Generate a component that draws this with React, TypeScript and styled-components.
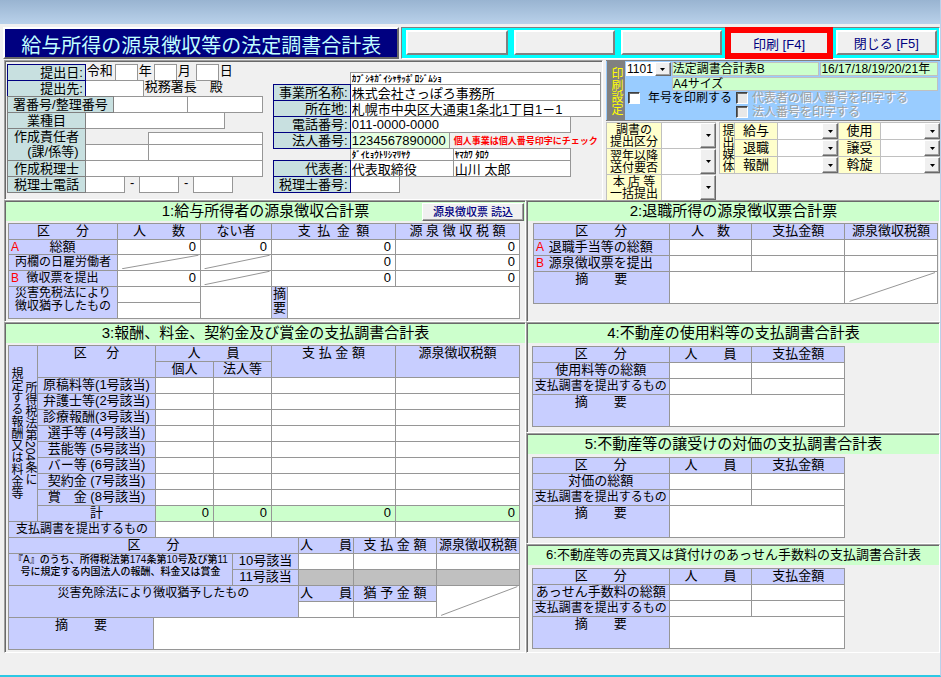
import React from 'react';
import styled, { createGlobalStyle, css } from 'styled-components';

const line = '#969696';
const lilac = '#c8ceff';
const mint = '#ccffcc';
const face = '#f0f0f0';
const navy = '#000080';

const fr = (cols: number[]) => cols.map((c) => `minmax(0, ${c}fr)`).join(' ');

const GlobalStyle = createGlobalStyle`
  *, *::before, *::after { box-sizing: border-box; }
  body { margin: 0; background: ${face}; }
  body, input, select, button {
    font-family: "Liberation Sans", "Noto Sans CJK JP", sans-serif;
    font-size: 13px;
    color: #000;
  }
`;

const Page = styled.div`
  min-height: 100vh;
  display: flex;
  flex-direction: column;
  background: ${face};
  border-right: 1px solid #b9d1ea;
  border-bottom: 2px solid #2cc8e4;
  white-space: nowrap;
  line-height: 14px;
`;

const Caption = styled.div`
  height: 24px;
  background: linear-gradient(#99b4d1, #b9d1ea);
`;

const TopRow = styled.header`
  display: grid;
  grid-template-columns: ${fr([396, 538])};
  gap: 2px;
  padding: 3px 0 1px 3px;
`;

const Title = styled.h1`
  margin: 0;
  height: 32px;
  padding-top: 3px;
  border: 2px solid;
  border-color: #fff #696969 #696969 #fff;
  background: ${navy};
  color: #c0ffff;
  font-size: 20px;
  font-weight: 400;
  line-height: 28px;
  text-align: center;
`;

const Toolbar = styled.nav`
  height: 32px;
  display: grid;
  grid-template-columns: repeat(5, minmax(0, 1fr));
  gap: 6px;
  padding: 2px 2px 3px 4px;
  background: #0ff;
  border: 1px solid;
  border-color: #808080 #fff #fff #808080;
`;

const ToolButton = styled.button<{ $hot?: boolean }>`
  min-width: 0;
  padding: 0;
  background: ${face};
  color: ${navy};
  border: 2px solid;
  border-color: #fff #808080 #808080 #fff;
  ${(p) => p.$hot && css`
    margin: -3px -3px -4px;
    border: 6px solid #f00;
  `}
`;

const Upper = styled.div`
  display: grid;
  grid-template-columns: ${fr([599, 334])};
  gap: 3px;
  margin-left: 4px;
  height: 140px;
`;

const Panel = styled.section<{ $bottom?: number }>`
  border: 1px solid;
  border-color: #a0a0a0 #fff #fff #a0a0a0;
  box-shadow: inset 1px 1px 0 #696969;
  padding: 1px 0 ${(p) => p.$bottom ?? 0}px 1px;
  min-width: 0;
`;

const FormPanel = styled(Panel)`
  display: grid;
  grid-template-columns: ${fr([255, 328])};
  column-gap: 11px;
  padding: 3px 2px 0 2px;
  margin-bottom: 1px;
`;

const FormColumn = styled.div<{ $top?: number }>`
  padding-top: ${(p) => p.$top ?? 0}px;
`;

const Line = styled.div<{ $cols: number[]; $h?: number }>`
  display: grid;
  grid-template-columns: ${(p) => fr(p.$cols)};
  grid-template-rows: ${(p) => p.$h ?? 16}px;
`;

const Tag = styled.label<{ $navy?: boolean; $center?: boolean }>`
  position: relative;
  z-index: 1;
  display: flex;
  align-items: center;
  justify-content: ${(p) => (p.$center ? 'center' : 'flex-end')};
  padding: 0 2px;
  margin: 0 -1px -1px 0;
  border: 1px solid ${(p) => (p.$navy ? navy : '#808080')};
  background: #c8e0e0;
`;

const TallTag = styled(Tag)`
  flex-direction: column;
  justify-content: flex-start;
  height: 33px;
  line-height: 15px;
`;

const Box = styled.input<{ $small?: boolean; $green?: boolean }>`
  min-width: 0;
  width: calc(100% + 1px);
  height: calc(100% + 1px);
  border: 1px solid ${line};
  border-radius: 0;
  padding: 0 1px;
  background: ${(p) => (p.$green ? '#e4ffe0' : '#fff')};
  ${(p) => p.$small && css`font-size: 9px; font-weight: 700;`}
`;

const Word = styled.span<{ $center?: boolean }>`
  padding-left: 2px;
  text-align: ${(p) => (p.$center ? 'center' : 'left')};
`;

const Note = styled.span`
  padding-left: 5px;
  color: #f00;
  font-size: 9px;
  font-weight: 700;
  line-height: 18px;
`;

const Settings = styled.div`
  display: flex;
  flex-direction: column;
  gap: 1px;
  min-width: 0;
`;

const PrintPanel = styled.section`
  display: grid;
  grid-template-columns: 18px minmax(0, 1fr);
  height: 61px;
  padding-left: 1px;
  border-top: 1px solid #808080;
  background: #99ccff;
  border-bottom: 1px solid #808080;
  font-size: 12px;
`;

const PrintTitle = styled.h2`
  margin: 0;
  font-size: 12px;
  font-weight: 400;
  line-height: 18px;
  writing-mode: vertical-rl;
  text-align: center;
  background: #808080;
  color: #ff0;
`;

const PrintLine = styled.div<{ $cols: number[] }>`
  display: grid;
  grid-template-columns: ${(p) => fr(p.$cols)};
  grid-template-rows: 14px;
  margin: 1px 2px 0 1px;
  column-gap: 1px;
`;

const Readout = styled.output<{ $start?: number }>`
  grid-column-start: ${(p) => p.$start ?? 'auto'};
  background: ${mint};
  border: 1px solid #c0c0c0;
  line-height: 12px;
`;

const Checks = styled.div`
  display: grid;
  grid-template-columns: ${fr([108, 204])};
  padding-left: 3px;
`;

const Check = styled.label<{ $off?: boolean; $col: number }>`
  grid-column: ${(p) => p.$col};
  display: flex;
  align-items: center;
  gap: ${(p) => (p.$off ? 4 : 8)}px;
  height: 14px;
  ${(p) => p.$off && css`color: #a0a0a0; text-shadow: 1px 1px 0 #fff;`}
`;

const Tick = styled.input`
  appearance: none;
  flex: none;
  width: 12px;
  height: 12px;
  margin: 0;
  background: #fff;
  border: 1px solid;
  border-color: #404040 #fff #fff #404040;
  box-shadow: inset 1px 1px 0 #696969;
  &:disabled { background: #e8e8e8; }
  &:checked { background: #000; }
`;

const Choices = styled.section`
  display: grid;
  grid-template-columns: ${fr([110, 221])};
  column-gap: 3px;
  align-items: start;
`;

const ChoiceGrid = styled.div<{ $cols: number[]; $row: number }>`
  display: grid;
  grid-template-columns: ${(p) => fr(p.$cols)};
  grid-auto-rows: ${(p) => p.$row}px;
  gap: 1px;
  padding: 1px 0 1px 1px;
  background: #c0c0c0;
`;

const ChoiceLabel = styled.label<{ $wide?: boolean }>`
  display: flex;
  align-items: center;
  justify-content: center;
  text-align: center;
  line-height: 12px;
  font-size: ${(p) => (p.$wide ? 13 : 12)}px;
  background: #ffffcc;
`;

const MediaTitle = styled.h2`
  grid-row: span 3;
  margin: 0;
  font-size: 12px;
  font-weight: 400;
  line-height: 14px;
  writing-mode: vertical-rl;
  text-align: center;
  background: #ffffcc;
`;

const PickerFrame = styled.div`
  position: relative;
  display: flex;
  min-width: 0;
  background: #fff;
`;

const PickerSelect = styled.select`
  appearance: none;
  width: 100%;
  height: 100%;
  border: 0;
  border-radius: 0;
  padding: 0 16px 0 1px;
  background: #fff;
  font-size: 12px;
`;

const PickerArrow = styled.span`
  position: absolute;
  top: 0;
  right: 0;
  bottom: 0;
  width: 16px;
  display: grid;
  place-items: center;
  pointer-events: none;
  background: ${face};
  border: 1px solid;
  border-color: #fff #696969 #696969 #fff;
  box-shadow: inset -1px -1px 0 #a0a0a0;
`;

function Picker({ id, label, value }: { id?: string; label?: string; value?: string }) {
  return (
    <PickerFrame>
      <PickerSelect id={id} aria-label={label}>
        <option>{value ?? ''}</option>
      </PickerSelect>
      <PickerArrow>
        <svg width="5" height="3" viewBox="0 0 5 3"><path d="M0 0h5L2.5 3z" fill="#000" /></svg>
      </PickerArrow>
    </PickerFrame>
  );
}

const Lower = styled.main`
  display: grid;
  grid-template-columns: ${fr([522, 414])};
  margin-left: 4px;
`;

const Stack = styled.div`
  display: flex;
  flex-direction: column;
  min-width: 0;
`;

const Heading = styled.div`
  position: relative;
  height: 19px;
  background: ${mint};
`;

const HeadingText = styled.h2<{ $size?: number }>`
  margin: 0;
  font-size: ${(p) => p.$size ?? 15}px;
  font-weight: 400;
  line-height: 18px;
  text-align: center;
`;

const LoadButton = styled.button`
  position: absolute;
  top: 1px;
  right: 1px;
  width: 102px;
  height: 18px;
  padding: 0;
  font-size: 11px;
  font-weight: 500;
  line-height: 14px;
  color: ${navy};
  background: ${face};
  border: 1px solid;
  border-color: #fff #696969 #696969 #fff;
  box-shadow: inset -1px -1px 0 #a0a0a0;
`;

const TableArea = styled.div<{ $pad: string }>`
  padding: ${(p) => p.$pad};
`;

const Table = styled.table<{ $joined?: boolean }>`
  width: 100%;
  table-layout: fixed;
  border-collapse: collapse;
  margin-top: ${(p) => (p.$joined ? -1 : 0)}px;
`;

const Col = styled.col<{ $w: number }>`
  width: ${(p) => p.$w}%;
`;

const Row = styled.tr<{ $h?: number }>`
  height: ${(p) => p.$h ?? 16}px;
`;

const cell = css`
  padding: 0;
  border: 1px solid ${line};
  vertical-align: top;
  line-height: 14px;
`;

const Th = styled.th<{ $size?: number }>`
  ${cell}
  background: ${lilac};
  font-weight: 400;
  font-size: ${(p) => p.$size ?? 13}px;
  text-align: center;
`;

const LeadTh = styled(Th)`
  line-height: 13px;
`;

const ClauseTh = styled(Th)`
  font-size: 10px;
  font-weight: 500;
  line-height: 12px;
`;

const Td = styled.td<{ $tone?: string }>`
  ${cell}
  background: ${(p) => p.$tone ?? '#fff'};
`;

const CellInput = styled.input<{ $h: number }>`
  display: block;
  width: 100%;
  height: ${(p) => p.$h}px;
  border: 0;
  border-radius: 0;
  padding: 0 4px 1px;
  background: transparent;
  text-align: right;
`;

const Slash = styled.svg<{ $h: number }>`
  display: block;
  width: 100%;
  height: ${(p) => p.$h}px;
`;

const Marked = styled.div`
  display: grid;
  grid-template-columns: 10px minmax(0, 1fr);
  padding: 0 12px 0 1px;
`;

const Mark = styled.span`
  color: #f00;
  font-size: 12px;
`;

const Vertical = styled.div`
  writing-mode: vertical-rl;
  width: 28px;
  height: 174px;
  line-height: 14px;
  font-size: 12px;
  text-align: center;
`;

function Cols({ widths }: { widths: number[] }) {
  const total = widths.reduce((a, b) => a + b, 0);
  return <colgroup>{widths.map((w, i) => <Col key={i} $w={(w / total) * 100} />)}</colgroup>;
}

type EntryProps = { name: string; value?: string; tone?: string; h?: number; span?: number; rows?: number };

function Entry({ name, value, tone, h = 14, span, rows }: EntryProps) {
  return (
    <Td $tone={tone} colSpan={span} rowSpan={rows}>
      <CellInput $h={h} aria-label={name} defaultValue={value} />
    </Td>
  );
}

function SlashCell({ h = 14, rows }: { h?: number; rows?: number }) {
  return (
    <Td rowSpan={rows}>
      <Slash $h={h} viewBox="0 0 100 100" preserveAspectRatio="none" aria-hidden="true">
        <line x1="5" y1="98" x2="98" y2="2" stroke={line} vectorEffect="non-scaling-stroke" />
      </Slash>
    </Td>
  );
}

function SalarySection() {
  return (
    <Panel $bottom={2}>
      <Heading>
        <HeadingText>1:給与所得者の源泉徴収合計票</HeadingText>
        <LoadButton type="button">源泉徴収票 読込</LoadButton>
      </Heading>
      <TableArea $pad="2px 5px 0 2px">
        <Table>
          <Cols widths={[109, 83, 71, 16, 108, 124]} />
          <tbody>
            <Row>
              <Th>区　　分</Th>
              <Th>人　　数</Th>
              <Th>ない者</Th>
              <Th colSpan={2}>支&ensp;払&ensp;金&ensp;額</Th>
              <Th>源 泉 徴 収 税 額</Th>
            </Row>
            <Row $h={15}>
              <Th><Marked><Mark>A</Mark>総額</Marked></Th>
              <Entry name="総額 人数" value="0" />
              <Entry name="総額 ない者" value="0" />
              <Entry name="総額 支払金額" value="0" span={2} />
              <Entry name="総額 源泉徴収税額" value="0" />
            </Row>
            <Row>
              <Th $size={12}>丙欄の日雇労働者</Th>
              <SlashCell />
              <SlashCell />
              <Entry name="丙欄 支払金額" value="0" span={2} />
              <Entry name="丙欄 源泉徴収税額" value="0" />
            </Row>
            <Row>
              <Th $size={12}><Marked><Mark>B</Mark>徴収票を提出</Marked></Th>
              <Entry name="提出 人数" value="0" />
              <SlashCell />
              <Entry name="提出 支払金額" value="0" span={2} />
              <Entry name="提出 源泉徴収税額" value="0" />
            </Row>
            <Row>
              <LeadTh $size={12} rowSpan={2}>災害免税法により<br />徴収猶予したもの</LeadTh>
              <Entry name="猶予 人数" />
              <Entry name="猶予 ない者" rows={2} h={30} />
              <Th rowSpan={2}>摘<br />要</Th>
              <Entry name="摘要" span={2} rows={2} h={30} />
            </Row>
            <Row>
              <Entry name="猶予 金額" />
            </Row>
          </tbody>
        </Table>
      </TableArea>
    </Panel>
  );
}

function RetirementSection() {
  return (
    <Panel>
      <Heading><HeadingText>2:退職所得の源泉徴収票合計票</HeadingText></Heading>
      <TableArea $pad="2px 1px 0 5px">
        <Table>
          <Cols widths={[136, 83, 93, 93]} />
          <tbody>
            <Row>
              <Th>区　　分</Th>
              <Th>人　数</Th>
              <Th>支払金額</Th>
              <Th>源泉徴収税額</Th>
            </Row>
            {[['A', '退職手当等の総額'], ['B', '源泉徴収票を提出']].map(([m, t]) => (
              <Row key={m}>
                <Th><Marked><Mark>{m}</Mark>{t}</Marked></Th>
                <Entry name={`${t} 人数`} />
                <Entry name={`${t} 支払金額`} />
                <Entry name={`${t} 源泉徴収税額`} />
              </Row>
            ))}
            <Row $h={32}>
              <Th>摘　　要</Th>
              <Entry name="退職 摘要" span={2} h={30} />
              <SlashCell h={30} />
            </Row>
          </tbody>
        </Table>
      </TableArea>
    </Panel>
  );
}

const feeRows = [
  '原稿料等(1号該当)', '弁護士等(2号該当)', '診療報酬(3号該当)', '選手等 (4号該当)',
  '芸能等 (5号該当)', 'バー等 (6号該当)', '契約金 (7号該当)', '賞　金 (8号該当)',
];
const feeCols = ['個人', '法人等', '支払金額', '源泉徴収税額'];

function FeeSection() {
  return (
    <Panel $bottom={2}>
      <Heading><HeadingText>3:報酬、料金、契約金及び賞金の支払調書合計表</HeadingText></Heading>
      <TableArea $pad="2px 5px 0 2px">
        <Table>
          <Cols widths={[29, 118, 58, 58, 124, 124]} />
          <tbody>
            <Row>
              <Th rowSpan={11}><Vertical>所得税法第204条に<br />規定する報酬又は料金等</Vertical></Th>
              <Th rowSpan={2}>区　&ensp;分</Th>
              <Th colSpan={2}>人　　員</Th>
              <Th rowSpan={2}>支 払 金 額</Th>
              <Th rowSpan={2}>源泉徴収税額</Th>
            </Row>
            <Row>
              <Th>個人</Th>
              <Th>法人等</Th>
            </Row>
            {feeRows.map((r) => (
              <Row key={r}>
                <Th>{r}</Th>
                {feeCols.map((c) => <Entry key={c} name={`${r} ${c}`} />)}
              </Row>
            ))}
            <Row>
              <Th>計</Th>
              {feeCols.map((c) => <Entry key={c} name={`計 ${c}`} value="0" tone={mint} />)}
            </Row>
            <Row>
              <Th $size={12} colSpan={2}>支払調書を提出するもの</Th>
              {feeCols.map((c) => <Entry key={c} name={`提出 ${c}`} />)}
            </Row>
          </tbody>
        </Table>
        <Table $joined>
          <Cols widths={[145, 79, 66, 55, 83, 83]} />
          <tbody>
            <Row>
              <Th colSpan={3}>区　　分</Th>
              <Th>人　　員</Th>
              <Th>支 払 金 額</Th>
              <Th>源泉徴収税額</Th>
            </Row>
            <Row>
              <ClauseTh colSpan={2} rowSpan={2}>
                『A』のうち、所得税法第174条第10号及び第11<br />号に規定する内国法人の報酬、料金又は賞金
              </ClauseTh>
              <Th>10号該当</Th>
              <Entry name="10号 人員" />
              <Entry name="10号 支払金額" />
              <Entry name="10号 源泉徴収税額" />
            </Row>
            <Row>
              <Th>11号該当</Th>
              <Td $tone="#c0c0c0" />
              <Td $tone="#c0c0c0" />
              <Td $tone="#c0c0c0" />
            </Row>
            <Row>
              <Th $size={12} colSpan={3} rowSpan={2}>災害免除法により徴収猶予したもの</Th>
              <Th>人　　員</Th>
              <Th>猶 予 金 額</Th>
              <SlashCell rows={2} h={30} />
            </Row>
            <Row>
              <Entry name="猶予 人員" />
              <Entry name="猶予金額" />
            </Row>
            <Row $h={32}>
              <Th>摘　　要</Th>
              <Entry name="報酬 摘要" span={5} h={30} />
            </Row>
          </tbody>
        </Table>
      </TableArea>
    </Panel>
  );
}

type EstateProps = { title: string; size?: number; total: string; bottom: number };

function EstateSection({ title, size, total, bottom }: EstateProps) {
  return (
    <Panel $bottom={bottom}>
      <Heading><HeadingText $size={size}>{title}</HeadingText></Heading>
      <TableArea $pad="3px 94px 0 4px">
        <Table>
          <Cols widths={[137, 83, 93]} />
          <tbody>
            <Row>
              <Th>区　　分</Th>
              <Th>人　　員</Th>
              <Th>支払金額</Th>
            </Row>
            {[total, '支払調書を提出するもの'].map((t, i) => (
              <Row key={t}>
                <Th $size={i ? 12 : 13}>{t}</Th>
                <Entry name={`${t} 人員`} />
                <Entry name={`${t} 支払金額`} />
              </Row>
            ))}
            <Row $h={32}>
              <Th>摘　　要</Th>
              <Entry name={`${total} 摘要`} span={2} h={30} />
            </Row>
          </tbody>
        </Table>
      </TableArea>
    </Panel>
  );
}

function FilingForm() {
  return (
    <FormColumn>
      <Line $cols={[78, 30, 22, 17, 22, 20, 22, 44]}>
        <Tag $navy htmlFor="year">提出日:</Tag>
        <Word>令和</Word>
        <Box id="year" aria-label="年" />
        <Word>年</Word>
        <Box aria-label="月" />
        <Word>月</Word>
        <Box aria-label="日" />
        <Word>日</Word>
      </Line>
      <Line $cols={[78, 58, 119]}>
        <Tag $navy htmlFor="office">提出先:</Tag>
        <Box id="office" />
        <Word>税務署長　殿</Word>
      </Line>
      <Line $cols={[106, 74, 75]}>
        <Tag $center htmlFor="number">署番号/整理番号</Tag>
        <Box id="number" />
        <Box aria-label="整理番号" />
      </Line>
      <Line $cols={[78, 139, 38]}>
        <Tag $center htmlFor="trade">業種目</Tag>
        <Box id="trade" />
      </Line>
      <Line $cols={[78, 177]} $h={32}>
        <TallTag htmlFor="person"><span>作成責任者</span><span>　(課/係等)</span></TallTag>
        <FormColumn $top={4}>
          <Line $cols={[63, 114]} $h={12}>
            <span />
            <Box id="person" />
          </Line>
          <Line $cols={[63, 114]}>
            <Box aria-label="課" />
            <Box aria-label="係" />
          </Line>
        </FormColumn>
      </Line>
      <Line $cols={[78, 177]}>
        <Tag $center htmlFor="accountant">作成税理士</Tag>
        <Box id="accountant" />
      </Line>
      <Line $cols={[78, 39, 15, 39, 15, 39, 30]}>
        <Tag $center htmlFor="phone1">税理士電話</Tag>
        <Box id="phone1" />
        <Word $center>-</Word>
        <Box aria-label="市内局番" />
        <Word $center>-</Word>
        <Box aria-label="加入者番号" />
      </Line>
    </FormColumn>
  );
}

function CompanyForm() {
  return (
    <FormColumn $top={8}>
      <Line $cols={[77, 250]} $h={12}>
        <span />
        <Box $small aria-label="事業所名称カナ" defaultValue="ｶﾌﾞｼｷｶﾞｲｼｬｻｯﾎﾟﾛｼﾞﾑｼｮ" />
      </Line>
      <Line $cols={[77, 250]}>
        <Tag $navy htmlFor="company">事業所名称:</Tag>
        <Box id="company" defaultValue="株式会社さっぽろ事務所" />
      </Line>
      <Line $cols={[77, 250]}>
        <Tag $navy htmlFor="address">所在地:</Tag>
        <Box id="address" defaultValue="札幌市中央区大通東1条北1丁目1－1" />
      </Line>
      <Line $cols={[77, 220, 30]}>
        <Tag $navy htmlFor="phone">電話番号:</Tag>
        <Box id="phone" defaultValue="011-0000-0000" />
      </Line>
      <Line $cols={[77, 99, 151]}>
        <Tag $navy htmlFor="corp">法人番号:</Tag>
        <Box $green id="corp" defaultValue="1234567890000" />
        <Note>個人事業は個人番号印字にチェック</Note>
      </Line>
      <Line $cols={[77, 103, 117, 30]} $h={12}>
        <span />
        <Box $small aria-label="役職カナ" defaultValue="ﾀﾞｲﾋｮｳﾄﾘｼﾏﾘﾔｸ" />
        <Box $small aria-label="氏名カナ" defaultValue="ﾔﾏｶﾜ ﾀﾛｳ" />
      </Line>
      <Line $cols={[77, 103, 117, 30]}>
        <Tag $navy htmlFor="rep">代表者:</Tag>
        <Box id="rep" defaultValue="代表取締役" />
        <Box aria-label="氏名" defaultValue="山川 太郎" />
      </Line>
      <Line $cols={[77, 49, 201]}>
        <Tag $navy htmlFor="taxno">税理士番号:</Tag>
        <Box id="taxno" />
      </Line>
    </FormColumn>
  );
}

function PrintSettings() {
  return (
    <Settings>
      <PrintPanel>
        <PrintTitle>印刷設定</PrintTitle>
        <div>
          <PrintLine $cols={[45, 148, 118]}>
            <Picker label="帳票番号" value="1101" />
            <Readout>法定調書合計表B</Readout>
            <Readout>16/17/18/19/20/21年</Readout>
          </PrintLine>
          <PrintLine $cols={[45, 266]}>
            <Readout $start={2}>A4サイズ</Readout>
          </PrintLine>
          <Checks>
            <Check $col={1}><Tick type="checkbox" />年号を印刷する</Check>
            <Check $col={2} $off><Tick type="checkbox" disabled />代表者の個人番号を印字する</Check>
            <Check $col={2} $off><Tick type="checkbox" disabled />法人番号を印字する</Check>
          </Checks>
        </div>
      </PrintPanel>
      <Choices>
        <ChoiceGrid $cols={[54, 54]} $row={25}>
          <ChoiceLabel htmlFor="kind">調書の<br />提出区分</ChoiceLabel>
          <Picker id="kind" />
          <ChoiceLabel htmlFor="next">翌年以降<br />送付要否</ChoiceLabel>
          <Picker id="next" />
          <ChoiceLabel htmlFor="batch">本 店 等<br />一括提出</ChoiceLabel>
          <Picker id="batch" />
        </ChoiceGrid>
        <ChoiceGrid $cols={[14, 42, 60, 41, 59]} $row={16}>
          <MediaTitle>提出媒体</MediaTitle>
          {[['給与', '使用'], ['退職', '譲受'], ['報酬', '斡旋']].map((pair) =>
            pair.map((t) => (
              <React.Fragment key={t}>
                <ChoiceLabel $wide htmlFor={t}>{t}</ChoiceLabel>
                <Picker id={t} />
              </React.Fragment>
            )),
          )}
        </ChoiceGrid>
      </Choices>
    </Settings>
  );
}

export default function App() {
  return (
    <Page>
      <GlobalStyle />
      <Caption />
      <TopRow>
        <Title>給与所得の源泉徴収等の法定調書合計表</Title>
        <Toolbar>
          <ToolButton type="button" aria-label="F1" />
          <ToolButton type="button" aria-label="F2" />
          <ToolButton type="button" aria-label="F3" />
          <ToolButton type="button" $hot>印刷 [F4]</ToolButton>
          <ToolButton type="button">閉じる [F5]</ToolButton>
        </Toolbar>
      </TopRow>
      <Upper>
        <FormPanel>
          <FilingForm />
          <CompanyForm />
        </FormPanel>
        <PrintSettings />
      </Upper>
      <Lower>
        <SalarySection />
        <RetirementSection />
        <FeeSection />
        <Stack>
          <EstateSection title="4:不動産の使用料等の支払調書合計表" total="使用料等の総額" bottom={5} />
          <EstateSection title="5:不動産等の譲受けの対価の支払調書合計表" total="対価の総額" bottom={5} />
          <EstateSection
            title="6:不動産等の売買又は貸付けのあっせん手数料の支払調書合計表"
            size={13}
            total="あっせん手数料の総額"
            bottom={3}
          />
        </Stack>
      </Lower>
    </Page>
  );
}
